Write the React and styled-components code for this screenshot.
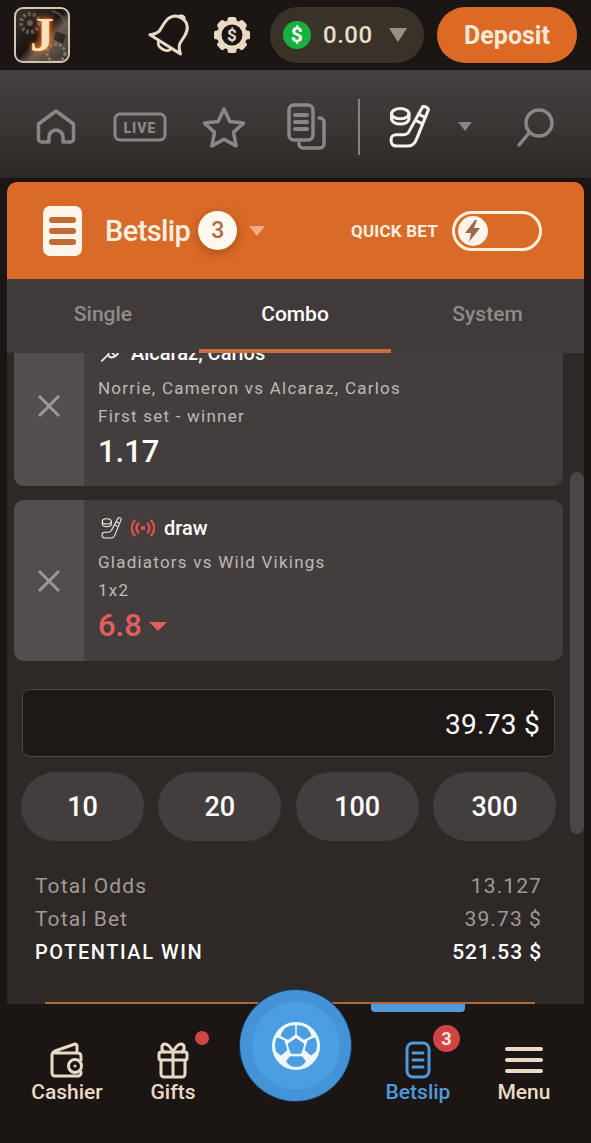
import React from 'react'
import styled, { createGlobalStyle } from 'styled-components'

const Global = createGlobalStyle`
  html, body {
    margin: 0;
    height: 100%;
    background: #1b1613;
    overflow: hidden;
  }
  * { box-sizing: border-box; }
  #root { height: 100%; }
`

const Page = styled.div`
  width: 591px;
  height: 1143px;
  display: flex;
  flex-direction: column;
  position: relative;
  overflow: hidden;
  background: #1b1613;
  font-family: Roboto, "Liberation Sans", sans-serif;
`

/* top bar */
const TopBar = styled.header`
  height: 70px;
  flex: none;
  display: flex;
  align-items: center;
  padding: 0 14px;
`
const Logo = styled.div`
  width: 56px;
  height: 56px;
  position: relative;
  overflow: hidden;
  border-radius: 9px;
  border: 2px solid #d3c4ae;
  background: linear-gradient(135deg, #3d3630 0%, #1a1411 48%, #6a6058 62%, #3a322c 100%);
  display: flex;
  align-items: center;
  justify-content: center;
`
const LogoArt = styled.svg`
  position: absolute;
  inset: 0;
  opacity: .6;
`
const LogoLetter = styled.span`
  position: relative;
  font-family: "Liberation Serif", serif;
  font-weight: 700;
  font-size: 48px;
  line-height: 1;
  color: #fbe0b8;
  text-shadow: 0 0 4px #f0701c, 0 0 10px #e8601c;
`
const TopIcons = styled.div`
  margin-left: auto;
  display: flex;
  align-items: center;
`
const IconGap = styled.span`
  width: 19px;
`
const Balance = styled.div`
  width: 154px;
  height: 56px;
  margin-left: 19px;
  border-radius: 28px;
  background: #3a3228;
  display: flex;
  align-items: center;
  padding-left: 13px;
  color: #e8dccb;
  font-size: 24px;
  font-weight: 500;
  letter-spacing: 0.5px;
`
const Coin = styled.span`
  width: 28px;
  height: 28px;
  border-radius: 50%;
  background: #17b13f;
  color: #fff;
  font-size: 21px;
  font-weight: 700;
  display: flex;
  align-items: center;
  justify-content: center;
  margin-right: 12px;
`
const Caret = styled.span`
  display: inline-block;
  width: 0;
  height: 0;
  border-left: ${p => p.$w}px solid transparent;
  border-right: ${p => p.$w}px solid transparent;
  border-top: ${p => p.$h}px solid ${p => p.$c};
  margin-left: ${p => p.$ml || 0}px;
`
const DepositButton = styled.button`
  width: 140px;
  height: 56px;
  margin-left: 13px;
  border: 0;
  border-radius: 28px;
  background: #dc6a25;
  color: #f7e9d8;
  font-family: inherit;
  font-size: 25px;
  font-weight: 700;
  padding: 0;
`

/* sports nav */
const SportNav = styled.nav`
  height: 108px;
  flex: none;
  display: flex;
  align-items: center;
  padding: 5px 0 0 36px;
  background: linear-gradient(180deg, #444040 0%, #3a3634 50%, #2d2826 100%);
`
const NavSlot = styled.div`
  width: ${p => p.$w}px;
  display: flex;
  align-items: center;
  flex: none;
`
const Divider = styled.div`
  width: 2px;
  height: 56px;
  background: #87827f;
  margin-right: 29px;
`

/* betslip panel */
const Panel = styled.main`
  flex: 1;
  min-height: 0;
  margin: 4px 7px 0;
  border-radius: 10px 10px 0 0;
  background: #2e2827;
  display: flex;
  flex-direction: column;
  overflow: hidden;
  position: relative;
`
const SlipHeader = styled.div`
  height: 97px;
  flex: none;
  background: #d96a27;
  display: flex;
  align-items: center;
  padding: 0 42px 0 36px;
  color: #fbf0e0;
`
const SlipIcon = styled.div`
  width: 39px;
  height: 50px;
  border-radius: 7px;
  background: #fdf5ea;
  display: flex;
  flex-direction: column;
  align-items: center;
  justify-content: center;
  gap: 5px;
  margin-right: 23px;
`
const SlipBar = styled.span`
  width: 27px;
  height: 6px;
  border-radius: 3px;
  background: #c26a33;
`
const SlipTitle = styled.div`
  font-size: 29px;
  font-weight: 500;
  letter-spacing: -0.6px;
`
const CountBadge = styled.div`
  width: 39px;
  height: 39px;
  margin-left: 8px;
  margin-right: 12px;
  border-radius: 50%;
  background: #fff8ee;
  color: #b36a3c;
  font-size: 23px;
  font-weight: 500;
  display: flex;
  align-items: center;
  justify-content: center;
  box-shadow: 0 3px 10px rgba(120, 50, 10, .5);
`
const QuickLabel = styled.div`
  margin-left: auto;
  font-size: 17px;
  font-weight: 700;
  letter-spacing: 0.2px;
  margin-right: 14px;
`
const Toggle = styled.div`
  width: 90px;
  height: 40px;
  border: 3px solid #fdf1dc;
  border-radius: 20px;
  padding: 1px;
  display: flex;
  align-items: center;
`
const Knob = styled.div`
  width: 30px;
  height: 30px;
  margin-left: 2px;
  border-radius: 50%;
  background: #fdf5ea;
  display: flex;
  align-items: center;
  justify-content: center;
`

const Tabs = styled.div`
  height: 74px;
  flex: none;
  display: grid;
  grid-template-columns: 192px 192px 193px;
  background: #403b3a;
  position: relative;
  z-index: 1;
`
const Tab = styled.div`
  display: flex;
  align-items: center;
  justify-content: center;
  font-size: 21px;
  font-weight: 500;
  color: ${p => (p.$active ? '#fff' : '#8f8b89')};
  border-bottom: 4px solid ${p => (p.$active ? '#c96f3e' : 'transparent')};
`

const Scroller = styled.div`
  flex: 1;
  min-height: 0;
  overflow: hidden;
  position: relative;
`
const ScrollBody = styled.div`
  margin-top: -28px;
  padding: 0 21px 0 7px;
  display: flex;
  flex-direction: column;
  gap: 14px;
`
const ScrollThumb = styled.div`
  position: absolute;
  right: 0;
  top: 119px;
  width: 14px;
  height: 362px;
  border-radius: 7px;
  background: #4b4645;
`
const Card = styled.article`
  height: 161px;
  display: flex;
  border-radius: 10px;
  background: #433e3d;
  overflow: hidden;
`
const RemoveCell = styled.div`
  width: 70px;
  flex: none;
  background: #524e4d;
  display: flex;
  align-items: center;
  justify-content: center;
`
const CardBody = styled.div`
  padding: 14px 0 0 14px;
  display: flex;
  flex-direction: column;
`
const Pick = styled.div`
  height: 28px;
  margin-left: 3px;
  display: flex;
  align-items: center;
  gap: 9px;
  color: #fff;
  font-size: 20px;
  font-weight: 500;
`
const Meta = styled.div`
  margin-top: ${p => p.$mt}px;
  color: #bdb9b6;
  font-size: 17px;
  line-height: 20px;
  letter-spacing: 1.23px;
`
const Odds = styled.div`
  margin-top: 7px;
  display: flex;
  align-items: center;
  color: ${p => (p.$down ? '#e35d5b' : '#fff')};
  font-size: 31px;
  line-height: 38px;
  font-weight: 500;
`

const Stake = styled.div`
  height: 68px;
  margin: 28px 0 0 15px;
  width: 533px;
  flex: none;
  border: 1px solid #4a4543;
  border-radius: 8px;
  background: #1e1917;
  display: flex;
  align-items: center;
  justify-content: flex-end;
  padding: 2px 14px 0 0;
  color: #fff;
  font-size: 28px;
  letter-spacing: 0.3px;
`
const Chips = styled.div`
  margin: 15px 0 0 14px;
  width: 535px;
  display: grid;
  grid-template-columns: repeat(4, 123px);
  justify-content: space-between;
`
const Chip = styled.button`
  height: 69px;
  border: 0;
  border-radius: 35px;
  background: #433e3d;
  color: #fff;
  font-family: inherit;
  font-size: 27px;
  font-weight: 500;
  padding: 0;
`
const Totals = styled.dl`
  margin: 34px 0 0 28px;
  width: 507px;
  display: grid;
  grid-template-columns: 1fr auto;
  row-gap: 11px;
  color: #9f9a96;
  font-size: 21px;
  line-height: 22px;
  letter-spacing: 1.1px;
`
const Term = styled.dt`
  color: ${p => (p.$strong ? '#fff' : 'inherit')};
  font-weight: ${p => (p.$strong ? 500 : 400)};
  font-size: ${p => (p.$strong ? 20 : 21)}px;
  letter-spacing: ${p => (p.$strong ? 1.55 : 1.1)}px;
`
const Value = styled.dd`
  margin: 0;
  text-align: right;
  color: ${p => (p.$strong ? '#fff' : 'inherit')};
  font-weight: ${p => (p.$strong ? 500 : 400)};
  font-size: 21px;
  letter-spacing: ${p => (p.$strong ? 0.9 : 1.1)}px;
`

/* bottom bar */
const BottomNav = styled.footer`
  height: 139px;
  flex: none;
  position: relative;
  background: #1b1613;
  display: grid;
  grid-template-columns: 134px 78px 1fr 96px 106px;
  padding: 0 14px 0 0;
  z-index: 2;
`
const CutLine = styled.div`
  position: absolute;
  left: 45px;
  right: 56px;
  top: -2px;
  height: 2px;
  background: #b4683a;
`
const Indicator = styled.div`
  position: absolute;
  left: 371px;
  top: 0;
  width: 94px;
  height: 8px;
  border-radius: 0 0 4px 4px;
  background: #4f9adb;
`
const Fab = styled.div`
  position: absolute;
  left: 240px;
  top: -14px;
  width: 111px;
  height: 111px;
  border-radius: 50%;
  background: #4493d6;
  box-shadow: 0 0 0 1px #123a5e;
  display: flex;
  align-items: center;
  justify-content: center;
`
const FabInner = styled.div`
  width: 88px;
  height: 88px;
  border-radius: 50%;
  background: #4c9ee3;
  display: flex;
  align-items: center;
  justify-content: center;
`
const BottomItem = styled.div`
  grid-column: ${p => p.$col};
  position: relative;
  left: ${p => p.$shift || 0}px;
  display: flex;
  flex-direction: column;
  align-items: center;
  padding-top: 37px;
  color: ${p => (p.$active ? '#4f9adb' : '#ead9c6')};
  font-size: 21px;
  font-weight: 500;
`
const IconBox = styled.div`
  height: 38px;
  display: flex;
  align-items: center;
  justify-content: center;
  margin-bottom: 1px;
`
const Dot = styled.span`
  position: absolute;
  top: 27px;
  right: 3px;
  width: 14px;
  height: 14px;
  border-radius: 50%;
  background: #cf4444;
`
const NavBadge = styled.span`
  position: absolute;
  top: 21px;
  right: 6px;
  width: 27px;
  height: 27px;
  border-radius: 50%;
  background: #cf4444;
  color: #f6e9da;
  font-size: 18px;
  font-weight: 700;
  display: flex;
  align-items: center;
  justify-content: center;
`

/* icons */
const Bell = () => (
  <svg width="46" height="46" viewBox="0 0 46 46" fill="none" stroke="#ead9c6" strokeWidth="3" strokeLinejoin="round" strokeLinecap="round">
    <g transform="rotate(32 23 23)">
      <path d="M23 3c-8 0-12 6-12 13v9c0 4-3 6-6 9h36c-3-3-6-5-6-9v-9c0-7-4-13-12-13z" />
      <path d="M20.500 3a2.500 2 0 0 1 5 0" />
      <path d="M16 35c0 6 14 6 14 0" />
    </g>
  </svg>
)
const Gear = () => (
  <svg width="38" height="38" viewBox="0 0 38 38">
    <g fill="#ead9c6">
      {[0, 45, 90, 135].map(a => (
        <rect key={a} x="14.500" y="1" width="9" height="36" rx="2.500" transform={`rotate(${a} 19 19)`} />
      ))}
      <circle cx="19" cy="19" r="15" />
    </g>
    <circle cx="19" cy="19" r="10.500" fill="#1b1613" />
    <text x="19" y="25" textAnchor="middle" fontSize="17" fontWeight="700" fontFamily="Roboto" fill="#ead9c6">$</text>
  </svg>
)
const Home = () => (
  <svg width="40" height="35" viewBox="0 0 40 35" fill="none" stroke="#8a8685" strokeWidth="3.500" strokeLinejoin="round">
    <path d="M2.500 15L20 2l17.500 13v15a3 3 0 0 1-3 3H27v-5a7 7 0 0 0-14 0v5H5.500a3 3 0 0 1-3-3z" />
  </svg>
)
const LiveIcon = () => (
  <svg width="54" height="30" viewBox="0 0 54 30">
    <rect x="2" y="2" width="50" height="26" rx="5" fill="none" stroke="#8a8685" strokeWidth="3" />
    <text x="27" y="20.500" textAnchor="middle" fontSize="14" fontWeight="900" letterSpacing="1" fontFamily="Roboto" fill="#8a8685">LIVE</text>
  </svg>
)
const Star = () => (
  <svg width="44" height="42" viewBox="0 0 44 42" fill="none" stroke="#8a8685" strokeWidth="3.500" strokeLinejoin="round">
    <path d="M22 3l5.800 12.500 13.700 1.600-10 9.300 2.600 13.500L22 33.200 9.900 39.900l2.600-13.500-10-9.300 13.700-1.600z" />
  </svg>
)
const Copies = () => (
  <svg width="40" height="48" viewBox="0 0 40 48" fill="none" stroke="#8a8685" strokeWidth="3.500" strokeLinecap="round">
    <rect x="2" y="2" width="24" height="35" rx="5" />
    <path d="M32 15h1a4 4 0 0 1 4 4v22a4 4 0 0 1-4 4H16a4 4 0 0 1-4-4v-1" />
    <path d="M8 12h12M8 19h12M8 26h12" strokeWidth="4" />
  </svg>
)
const Hockey = ({ size = 41, color = '#f6f1ea', width = 3 }) => (
  <svg width={size} height={size * 1.05} viewBox="0 0 40 42" fill="none" stroke={color} strokeWidth={width} strokeLinejoin="round" strokeLinecap="round">
    <path d="M33 1.500c2-.5 5 1 5.500 3L27 33c-1.500 4-4 7-8 7H7c-3 0-5-2-5-5v-1c0-3 2-5 5-5h7c3 0 5-1 6-4z" />
    <path d="M29 9l5 2.500M26 15l5 2.500" />
    <ellipse cx="11" cy="8.500" rx="8.500" ry="5" />
    <path d="M2.500 8.500v5c0 3 4 5 8.500 5s8.500-2 8.500-5v-5" />
  </svg>
)
const Search = () => (
  <svg width="38" height="40" viewBox="0 0 38 40" fill="none" stroke="#8a8685" strokeWidth="3.500" strokeLinecap="round">
    <circle cx="22" cy="16" r="13" />
    <path d="M12 26L2 38" />
  </svg>
)
const Bolt = () => (
  <svg width="18" height="22" viewBox="0 0 18 22">
    <path fill="#9a6a4a" d="M11 0L1 13h6l-2 9 11-14h-6l3-8z" />
  </svg>
)
const Cross = () => (
  <svg width="22" height="22" viewBox="0 0 22 22" stroke="#9b9795" strokeWidth="3">
    <path d="M1 1l20 20M21 1L1 21" />
  </svg>
)
const Tennis = () => (
  <svg width="21" height="20" viewBox="0 0 24 22" fill="none" stroke="#f6f1ea" strokeWidth="2" strokeLinecap="round">
    <path d="M1 20l7-7M8 13c2-5 8-9 14-9-1 6-4 11-9 12-2 .5-4-1-5-3zM11 9l5 5M15 7l4 4" />
  </svg>
)
const LiveSignal = () => (
  <svg width="24" height="20" viewBox="0 0 26 20" fill="none" stroke="#d9524f" strokeWidth="2.500" strokeLinecap="round">
    <circle cx="13" cy="10" r="2.500" fill="#d9524f" stroke="none" />
    <path d="M8 5a7 7 0 0 0 0 10M18 5a7 7 0 0 1 0 10M4 2a12 12 0 0 0 0 16M22 2a12 12 0 0 1 0 16" />
  </svg>
)
const Wallet = () => (
  <svg width="34" height="36" viewBox="0 0 34 36" fill="none" stroke="#ead9c6" strokeWidth="3" strokeLinejoin="round" strokeLinecap="round">
    <path d="M5 11h23a3 3 0 0 1 3 3v4M31 30v1a3 3 0 0 1-3 3H5a3 3 0 0 1-3-3V13c0-2 1-3 3-4l20-7c1 0 2 1 2 2v5" />
    <circle cx="25" cy="24" r="6.500" />
    <circle cx="25" cy="24" r="1.500" fill="#ead9c6" stroke="none" />
  </svg>
)
const Gift = () => (
  <svg width="34" height="38" viewBox="0 0 32 38" fill="none" stroke="#ead9c6" strokeWidth="3" strokeLinejoin="round" strokeLinecap="round">
    <rect x="2" y="11" width="28" height="8" rx="2" />
    <path d="M4 19v14a3 3 0 0 0 3 3h18a3 3 0 0 0 3-3V19M16 11v25M16 11c-2-4-5-8-8-8-4 0-4 6-1 8M16 11c2-4 5-8 8-8 4 0 4 6 1 8" />
  </svg>
)
const SlipNavIcon = () => (
  <svg width="26" height="38" viewBox="0 0 26 38" fill="none" stroke="#4f9adb" strokeWidth="3" strokeLinecap="round">
    <rect x="2" y="2" width="22" height="34" rx="6" />
    <path d="M8 12h10M8 19h10M8 26h10" />
  </svg>
)
const Burger = () => (
  <svg width="38" height="28" viewBox="0 0 38 28" stroke="#ead9c6" strokeWidth="4" strokeLinecap="round">
    <path d="M2 3h34M2 14h34M2 25h34" />
  </svg>
)
const Ball = () => (
  <svg width="48" height="48" viewBox="0 0 48 48">
    <circle cx="24" cy="24" r="24" fill="#eef7fd" />
    <g fill="#4c9ee3" stroke="#4c9ee3" strokeWidth="2.500" strokeLinejoin="round">
      <path d="M24 17.500l7 5-2.700 8h-8.600l-2.700-8z" />
      <path d="M15.500 6c2-1 4-1.500 6.500-1.500V12l-6 4.500-6-3c1-3.500 3-6 5.500-7.500z" />
      <path d="M32.500 6c-2-1-4-1.500-6.500-1.500V12l6 4.500 6-3c-1-3.500-3-6-5.500-7.500z" />
      <path d="M36.500 19.500l6-2.500c1.500 4 1.500 8.500.2 12l-3.700 3-5-4.500z" />
      <path d="M11.500 19.500l-6-2.500c-1.500 4-1.500 8.500-.2 12l3.700 3 5-4.500z" />
      <path d="M18.500 35.500h11l3 4-4 3.500c-3 .8-6 .8-9 0l-4-3.500z" />
    </g>
  </svg>
)

const totals = [
  ['Total Odds', '13.127'],
  ['Total Bet', '39.73 $'],
]

export default function App() {
  return (
    <Page>
      <Global />
      <TopBar>
        <Logo>
          <LogoArt width="52" height="52" viewBox="0 0 52 52" fill="none">
            <circle cx="14" cy="14" r="9" stroke="#8b8279" strokeWidth="4" strokeDasharray="3 2" />
            <circle cx="14" cy="14" r="3" fill="#8b8279" />
            <path d="M36 2c8 2 13 8 14 16" stroke="#6d645b" strokeWidth="2" />
            <circle cx="40" cy="44" r="9" stroke="#a59b8e" strokeWidth="3" strokeDasharray="3 2" />
            <path d="M40 22l10 4-3 9-10-5z" fill="#15100e" />
          </LogoArt>
          <LogoLetter>J</LogoLetter>
        </Logo>
        <TopIcons>
          <Bell />
          <IconGap />
          <Gear />
          <Balance>
            <Coin>$</Coin>
            0.00
            <Caret $w={9} $h={14} $c="#9a9085" $ml={16} />
          </Balance>
          <DepositButton>Deposit</DepositButton>
        </TopIcons>
      </TopBar>

      <SportNav>
        <NavSlot $w={77}><Home /></NavSlot>
        <NavSlot $w={89}><LiveIcon /></NavSlot>
        <NavSlot $w={85}><Star /></NavSlot>
        <NavSlot $w={71}><Copies /></NavSlot>
        <Divider />
        <NavSlot $w={69}><Hockey /></NavSlot>
        <NavSlot $w={59}><Caret $w={7} $h={9} $c="#8a8685" /></NavSlot>
        <NavSlot $w={38}><Search /></NavSlot>
      </SportNav>

      <Panel>
        <SlipHeader>
          <SlipIcon>
            <SlipBar />
            <SlipBar />
            <SlipBar />
          </SlipIcon>
          <SlipTitle>Betslip</SlipTitle>
          <CountBadge>3</CountBadge>
          <Caret $w={8} $h={10} $c="#f3ab82" />
          <QuickLabel>QUICK BET</QuickLabel>
          <Toggle>
            <Knob><Bolt /></Knob>
          </Toggle>
        </SlipHeader>

        <Tabs>
          <Tab>Single</Tab>
          <Tab $active>Combo</Tab>
          <Tab>System</Tab>
        </Tabs>

        <Scroller>
          <ScrollBody>
            <Card>
              <RemoveCell><Cross /></RemoveCell>
              <CardBody>
                <Pick><Tennis /> Alcaraz, Carlos</Pick>
                <Meta $mt={11}>Norrie, Cameron vs Alcaraz, Carlos</Meta>
                <Meta $mt={8}>First set - winner</Meta>
                <Odds>1.17</Odds>
              </CardBody>
            </Card>
            <Card>
              <RemoveCell><Cross /></RemoveCell>
              <CardBody>
                <Pick>
                  <Hockey size={21} width={2} />
                  <LiveSignal />
                  draw
                </Pick>
                <Meta $mt={10}>Gladiators vs Wild Vikings</Meta>
                <Meta $mt={8}>1x2</Meta>
                <Odds $down>6.8<Caret $w={9} $h={9} $c="#e35d5b" $ml={7} /></Odds>
              </CardBody>
            </Card>
          </ScrollBody>
          <Stake>39.73 $</Stake>
          <Chips>
            {[10, 20, 100, 300].map(v => <Chip key={v}>{v}</Chip>)}
          </Chips>
          <Totals>
            {totals.map(([k, v]) => (
              <React.Fragment key={k}>
                <Term>{k}</Term>
                <Value>{v}</Value>
              </React.Fragment>
            ))}
            <Term $strong>POTENTIAL WIN</Term>
            <Value $strong>521.53 $</Value>
          </Totals>
          <ScrollThumb />
        </Scroller>
      </Panel>

      <BottomNav>
        <CutLine />
        <Indicator />
        <BottomItem $col={1}>
          <IconBox><Wallet /></IconBox>
          Cashier
        </BottomItem>
        <BottomItem $col={2}>
          <IconBox><Gift /></IconBox>
          Gifts
          <Dot />
        </BottomItem>
        <BottomItem $col={4} $active $shift={-5}>
          <IconBox><SlipNavIcon /></IconBox>
          Betslip
          <NavBadge>3</NavBadge>
        </BottomItem>
        <BottomItem $col={5}>
          <IconBox><Burger /></IconBox>
          Menu
        </BottomItem>
        <Fab>
          <FabInner><Ball /></FabInner>
        </Fab>
      </BottomNav>
    </Page>
  )
}
